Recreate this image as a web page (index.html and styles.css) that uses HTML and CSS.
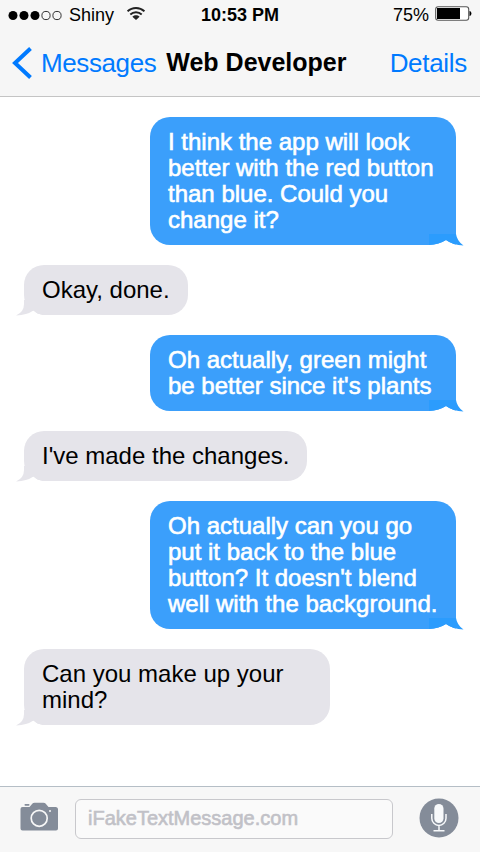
FILE: index.html
```html
<!DOCTYPE html>
<html lang="en">
<head>
<meta charset="utf-8">
<title>Web Developer</title>
<link rel="stylesheet" href="styles.css">
</head>
<body>
<div class="phone">
  <header class="header">
    <div class="status">
      <div class="carrier">
        <svg class="signal" width="54" height="11" viewBox="0 0 54 11"><circle cx="5" cy="5.5" r="4.5"/><circle cx="16" cy="5.5" r="4.5"/><circle cx="27" cy="5.5" r="4.5"/><g fill="none" stroke="#000" stroke-width=".8"><circle cx="38" cy="5.5" r="4.1"/><circle cx="49" cy="5.5" r="4.1"/></g></svg>
        <span>Shiny</span>
        <svg class="wifi" width="18" height="13" viewBox="0 0 18 13"><g fill="none" stroke="#222" stroke-width="1.900"><path d="M.6 4.300C5.200-.1 12.800-.1 17.400 4.300"/><path d="M3.300 7.500c3.200-3 8.200-3 11.400 0"/></g><path d="M5.400 9.700c2.100-1.900 5.100-1.900 7.200 0L9 13z" fill="#222"/></svg>
      </div>
      <span class="time">10:53 PM</span>
      <div class="power">
        <span>75%</span>
        <svg width="38" height="16" viewBox="0 0 38 16"><rect x=".7" y=".7" width="33" height="13.600" rx="2.500" fill="#fff" stroke="#555" stroke-width="1.100"/><path d="M2 2h23v11H2z"/><path d="M34.500 5c2.600.5 2.600 4.500 0 5z"/></svg>
      </div>
    </div>
    <nav class="nav">
      <svg class="back" width="20" height="32" viewBox="0 0 20 32"><path d="M18.500 1.500L3 16l15.500 14.500" fill="none" stroke="#007aff" stroke-width="4"/></svg>
      <a class="messages">Messages</a>
      <h1>Web Developer</h1>
      <a class="details">Details</a>
    </nav>
  </header>
  <main class="chat">
    <div class="bubble sent">I think the app will look<br>better with the red button<br>than blue. Could you<br>change it?<svg class="tail" width="35" height="13" viewBox="0 0 35 13"><path d="M0 11Q10 10.500 17 6Q24 11 34.500 11.500V13H0z" fill="#fff"/><path d="M0 0H27Q28 7 34.500 11.600Q24 11.200 17 6Q10 10.500 0 11z" fill="#2b9cfd"/></svg></div>
    <div class="bubble received">Okay, done.<svg class="tail" width="27" height="16" viewBox="0 0 27 16"><path d="M0 16L17.500 10.500Q21 14 27 15V16z" fill="#fff"/><path d="M8 0V4Q8 12 0 15.500Q11 15 17.500 10.500Q21 14 27 15V0z" fill="#e5e4ea"/></svg></div>
    <div class="bubble sent">Oh actually, green might<br>be better since it's plants<svg class="tail" width="35" height="13" viewBox="0 0 35 13"><path d="M0 11Q10 10.500 17 6Q24 11 34.500 11.500V13H0z" fill="#fff"/><path d="M0 0H27Q28 7 34.500 11.600Q24 11.200 17 6Q10 10.500 0 11z" fill="#2b9cfd"/></svg></div>
    <div class="bubble received">I've made the changes.<svg class="tail" width="27" height="16" viewBox="0 0 27 16"><path d="M0 16L17.500 10.500Q21 14 27 15V16z" fill="#fff"/><path d="M8 0V4Q8 12 0 15.500Q11 15 17.500 10.500Q21 14 27 15V0z" fill="#e5e4ea"/></svg></div>
    <div class="bubble sent">Oh actually can you go<br>put it back to the blue<br>button? It doesn't blend<br>well with the background.<svg class="tail" width="35" height="13" viewBox="0 0 35 13"><path d="M0 11Q10 10.500 17 6Q24 11 34.500 11.500V13H0z" fill="#fff"/><path d="M0 0H27Q28 7 34.500 11.600Q24 11.200 17 6Q10 10.500 0 11z" fill="#2b9cfd"/></svg></div>
    <div class="bubble received wide">Can you make up your<br>mind?<svg class="tail" width="27" height="16" viewBox="0 0 27 16"><path d="M0 16L17.500 10.500Q21 14 27 15V16z" fill="#fff"/><path d="M8 0V4Q8 12 0 15.500Q11 15 17.500 10.500Q21 14 27 15V0z" fill="#e5e4ea"/></svg></div>
  </main>
  <footer class="composer">
    <svg class="camera" width="38" height="29" viewBox="0 0 38 29"><path d="M2.500 5H9.500L12.500 1.500Q13.200.7 14.500.7H23.500Q24.800.7 25.500 1.500L28.500 5H35.500Q38 5 38 7.500V26.500Q38 28.500 36 28.500H2.500Q.5 28.500.5 26.500V7Q.5 5 2.500 5z" fill="#848c99"/><rect x="4.500" y="2" width="5" height="1.800" rx=".8" fill="#848c99"/><circle cx="19.200" cy="16.300" r="8" fill="none" stroke="#f7f7f7" stroke-width="1.700"/><circle cx="30" cy="9" r="1" fill="#f7f7f7"/></svg>
    <div class="field"><span>iFakeTextMessage.com</span></div>
    <svg class="mic" width="40" height="40" viewBox="0 0 40 40"><circle cx="20" cy="20" r="19.500" fill="#848c99"/><rect x="15.300" y="6" width="9.200" height="19" rx="4.600" fill="#f7f9fb"/><path d="M12.800 16v4.300a7.100 7.100 0 0 0 14.200 0V16M20 27.500V32M14.500 32.700h11" fill="none" stroke="#f7f9fb" stroke-width="1.500"/></svg>
  </footer>
</div>
</body>
</html>
```
FILE: styles.css
```css
* { box-sizing: border-box; }
body { margin: 0; font-family: "Liberation Sans", Arial, sans-serif; color: #000; background: #fff; }
svg { display: block; flex: none; }
.phone { width: 480px; height: 852px; display: flex; flex-direction: column; overflow: hidden; }
.header { height: 97px; flex: none; background: #f6f6f6; border-bottom: 1px solid #c4c4c4; }
.status { height: 30px; display: grid; grid-template-columns: 1fr auto 1fr; align-items: center; font-size: 18px; line-height: 30px; }
.carrier { display: flex; align-items: center; padding-left: 8px; }
.carrier span { margin-left: 7px; }
.wifi { margin: 0 0 3px 13px; }
.time { font-weight: bold; }
.power { display: flex; align-items: center; justify-content: flex-end; gap: 6px; padding-right: 7px; }
.power svg { margin-top: -2px; }
.nav { height: 66px; display: flex; align-items: center; padding: 0 13px 0 12px; white-space: nowrap; }
.nav a { color: #007aff; font-size: 26px; line-height: 30px; letter-spacing: -.3px; }
.nav .messages { margin-left: 9px; letter-spacing: -.4px; }
.nav h1 { margin: -2px 0 0 10px; font-size: 25px; line-height: 30px; }
.details { margin-left: auto; }
.chat { flex: 1; display: flex; flex-direction: column; align-items: flex-start; gap: 20px; padding: 20px 24px 0; }
.bubble { position: relative; padding: 12px 18px; border-radius: 20px; font-size: 24px; line-height: 26px; white-space: nowrap; }
.sent { align-self: flex-end; width: 306px; background: #3b9ffb; color: #fff; border-bottom-right-radius: 0; -webkit-text-stroke: .6px #fff; }
.received { background: #e5e4ea; }
.wide { width: 306px; }
.tail { position: absolute; }
.sent .tail { right: -8px; bottom: -2px; }
.received .tail { left: -8px; bottom: -1px; }
.composer { height: 66px; flex: none; display: flex; align-items: flex-start; padding: 12px 21px 0 20px; background: #f7f7f7; border-top: 1px solid #b5bec6; }
.camera { margin-top: 3px; }
.field { width: 318px; height: 40px; margin-left: 17px; padding-left: 12px; border: 1px solid #c8c8cc; border-radius: 6px; background: #fafafa; color: #c1c1c7; font-size: 20px; line-height: 37px; -webkit-text-stroke: .6px #c1c1c7; }
.mic { margin: -1px 0 0 auto; }
```
